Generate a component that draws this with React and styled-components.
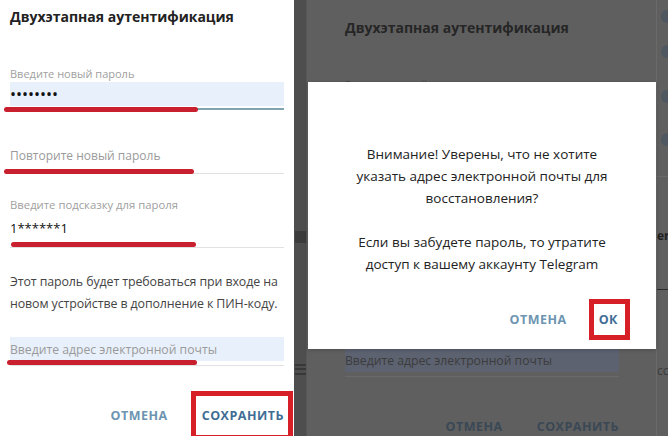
import styled, { createGlobalStyle } from 'styled-components'

const Global = createGlobalStyle`
  html, body { margin: 0; padding: 0; }
  body { font-family: "Open Sans", "DejaVu Sans", sans-serif; }
`

const Page = styled.div`
  display: flex;
  width: 668px;
  height: 436px;
  overflow: hidden;
  background: #5f5f5f;
`

const Panel = styled.div`
  flex: none;
  width: 294px;
  background: #fff;
  position: relative;
`

const Strip = styled.div`
  flex: none;
  width: 12px;
  background: #4e4e4e;
  border-right: 1px solid #575757;
  display: flex;
  flex-direction: column;
  align-items: center;
`

const DimArea = styled.div`
  flex: none;
  width: 349px;
  position: relative;
  border-right: 1px solid #6a6a6a;
`

const DimInner = styled.div`
  padding: 11px 0 0 28px;
`

const Side = styled.div`
  flex: 1;
  display: flex;
  flex-direction: column;
  padding-top: 8px;
`

const Form = styled.div`
  display: flex;
  flex-direction: column;
  width: 274px;
  padding: 0 10px;
`

const Title = styled.div`
  font-size: 14px;
  font-weight: 700;
  line-height: 20px;
  margin-top: 7px;
  color: ${(p) => (p.$dim ? '#262626' : '#222')};
  white-space: nowrap;
`

const Label = styled.div`
  font-size: ${(p) => p.$fs || 11}px;
  line-height: 16px;
  color: ${(p) => (p.$dim ? '#454545' : '#a0a0a0')};
  margin-top: ${(p) => p.$mt}px;
  white-space: nowrap;
`

const Box = styled.div`
  height: 24px;
  display: flex;
  align-items: center;
  background: ${(p) => (p.$filled ? (p.$dim ? '#5c6270' : '#e8f0fb') : 'transparent')};
  margin-top: ${(p) => p.$mt || 0}px;
  font-size: ${(p) => p.$fs || 13}px;
  color: ${(p) => (p.$dim ? '#3c3c3c' : p.$ph ? '#9a9a9a' : '#111')};
  white-space: nowrap;
`

const Dots = styled.span`
  font-size: 16px;
  color: #111;
`

const Underline = styled.div`
  position: relative;
  height: ${(p) => p.$h || 1}px;
  margin-top: ${(p) => p.$mt || 0}px;
  background: ${(p) => (p.$dim ? '#6a6a6a' : p.$color || '#e1e1e1')};
`

const Mark = styled.div`
  position: absolute;
  left: ${(p) => p.$left}px;
  top: ${(p) => p.$top}px;
  width: ${(p) => p.$w}px;
  height: 5px;
  border-radius: 3px;
  background: #c8202e;
`

const Text = styled.p`
  margin: 23px 0 0;
  font-size: 12.4px;
  letter-spacing: -0.1px;
  line-height: 22px;
  color: ${(p) => (p.$dim ? '#2f2f2f' : '#444')};
`

const Buttons = styled.div`
  display: flex;
  justify-content: flex-end;
  align-items: center;
  gap: 34px;
  margin-top: 41px;
`

const Btn = styled.div`
  position: relative;
  font-size: 12.5px;
  font-weight: 700;
  letter-spacing: 0.5px;
  color: ${(p) => (p.$dim ? '#3a4856' : p.$primary ? '#3f6d95' : '#6d94b1')};
  white-space: nowrap;
`

const RedBox = styled.div`
  position: absolute;
  left: ${(p) => p.$l}px;
  top: ${(p) => p.$t}px;
  right: ${(p) => p.$r}px;
  bottom: ${(p) => p.$b}px;
  border: 5px solid #d61f27;
`

const Modal = styled.div`
  position: absolute;
  left: 1px;
  right: 0;
  top: 82px;
  height: 267px;
  background: #fff;
  display: flex;
  flex-direction: column;
  box-shadow: 0 1px 4px rgba(0, 0, 0, 0.2);
`

const ModalText = styled.div`
  margin-top: 61px;
  text-align: center;
  font-size: 13.5px;
  line-height: 22px;
  color: #222;
`

const Gap = styled.div`
  height: 22px;
`

const ModalButtons = styled.div`
  display: flex;
  justify-content: flex-end;
  align-items: center;
  gap: 32px;
  margin-top: auto;
  padding: 0 38px 21px 0;
`

const Keyboard = styled.div`
  margin-top: 231px;
  width: 11px;
  height: 12px;
  background: #3c3c3c;
`

const Burger = styled.div`
  margin-top: 121px;
  width: 11px;
  height: 11px;
  background: linear-gradient(#383838 0 2px, transparent 2px 4.5px, #383838 4.5px 6.5px, transparent 6.5px 9px, #383838 9px 11px);
`

const Avatar = styled.div`
  width: 22px;
  height: 13px;
  border-radius: 6px;
  background: #4f5860;
  margin: ${(p) => p.$mt}px 0 0 4px;
`

const SideText = styled.div`
  font-size: 12px;
  font-weight: ${(p) => (p.$light ? 400 : 700)};
  color: ${(p) => (p.$light ? '#3a3a3a' : '#1f1f1f')};
  margin-top: ${(p) => p.$mt}px;
  white-space: nowrap;
`

const SideRule = styled.div`
  height: 1px;
  background: ${(p) => p.$c};
  margin-top: ${(p) => p.$mt}px;
`

const TwoStepForm = ({ dim }) => (
  <Form>
    <Title $dim={dim}>Двухэтапная аутентификация</Title>

    <Label $dim={dim} $mt={39}>Введите новый пароль</Label>
    <Box $filled $dim={dim}>
      {dim ? null : <Dots>••••••••</Dots>}
    </Box>
    <Underline $h={2} $mt={2} $dim={dim} $color='#80a5b0'>
      {!dim && <Mark $left={-6} $top={-1} $w={194} />}
    </Underline>

    <Box $ph $dim={dim} $mt={33} $fs={12}>Повторите новый пароль</Box>
    <Underline $mt={6} $dim={dim}>
      {!dim && <Mark $left={-6} $top={-4} $w={190} />}
    </Underline>

    <Label $dim={dim} $mt={23} $fs={11.3}>Введите подсказку для пароля</Label>
    <Box $dim={dim} $mt={3}>1******1</Box>
    <Underline $mt={7} $dim={dim}>
      {!dim && <Mark $left={1} $top={-5} $w={185} />}
    </Underline>

    <Text $dim={dim}>
      Этот пароль будет требоваться при входе на новом устройстве в дополнение к ПИН-коду.
    </Text>

    <Box $filled $ph $dim={dim} $mt={22} $fs={12.2}>Введите адрес электронной почты</Box>
    <Underline $mt={4} $dim={dim}>
      {!dim && <Mark $left={-3} $top={-5} $w={190} />}
    </Underline>

    <Buttons>
      <Btn $dim={dim}>ОТМЕНА</Btn>
      <Btn $dim={dim} $primary>
        СОХРАНИТЬ
        {!dim && <RedBox $l={-11} $t={-16} $r={-9} $b={-16} />}
      </Btn>
    </Buttons>
  </Form>
)

const App = () => (
  <Page>
    <Global />
    <Panel>
      <TwoStepForm />
    </Panel>

    <Strip>
      <Keyboard />
      <Burger />
    </Strip>

    <DimArea>
      <DimInner>
        <TwoStepForm dim />
      </DimInner>

      <Modal>
        <ModalText>
          Внимание! Уверены, что не хотите
          <br />
          указать адрес электронной почты для
          <br />
          восстановления?
          <Gap />
          Если вы забудете пароль, то утратите
          <br />
          доступ к вашему аккаунту Telegram
        </ModalText>
        <ModalButtons>
          <Btn>ОТМЕНА</Btn>
          <Btn $primary>
            ОК
            <RedBox $l={-10} $t={-12} $r={-12} $b={-12} />
          </Btn>
        </ModalButtons>
      </Modal>
    </DimArea>

    <Side>
      <Avatar $mt={2} />
      <Avatar $mt={22} />
      <Avatar $mt={32} />
      <Avatar $mt={30} />
      <SideRule $c='#6a6a6a' $mt={30} />
      <SideText $mt={50}>er -</SideText>
      <SideRule $c='#2a2a2a' $mt={45} />
      <SideText $mt={72} $light>cc</SideText>
    </Side>
  </Page>
)

export default App
